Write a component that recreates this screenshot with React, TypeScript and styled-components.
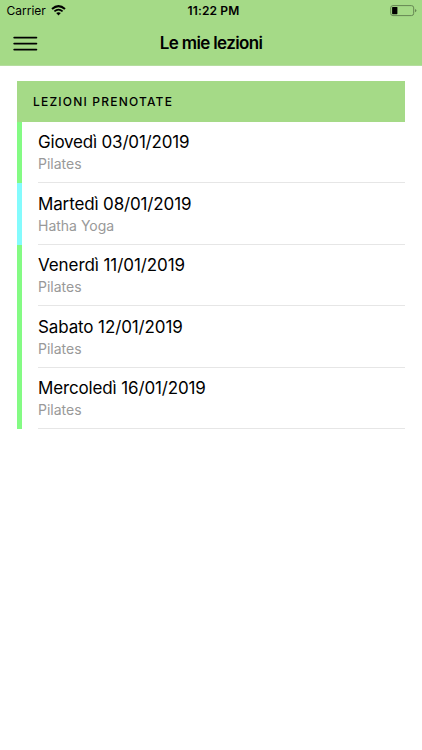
import React from "react";
import styled, { createGlobalStyle } from "styled-components";

const GlobalStyle = createGlobalStyle`
  * { box-sizing: border-box; }
  html, body { margin: 0; background: #fff; }
  body { font-family: Inter, "Liberation Sans", sans-serif; color: #000; }
`;

const Screen = styled.div`
  min-height: 750px;
  background: #fff;
`;

const TopArea = styled.header`
  height: 66px;
  background: #a5da87;
  border-bottom: 1px solid #b5dd9f;
`;

const StatusBar = styled.div`
  display: grid;
  grid-template-columns: 1fr auto 1fr;
  align-items: start;
  height: 22px;
  padding: 0 5px 0 6.5px;
`;

const Carrier = styled.div`
  display: flex;
  align-items: center;
  gap: 5px;
  font-size: 12px;
  line-height: 22px;
`;

const Signal = styled.span`
  display: flex;
  margin-top: -1px;
`;

const Clock = styled.div`
  padding-left: 3.5px;
  font-size: 12px;
  line-height: 22px;
  font-weight: 600;
  letter-spacing: 0.15px;
`;

const BatterySlot = styled.div`
  display: flex;
  justify-content: flex-end;
  padding-top: 5px;
`;

const NavBar = styled.div`
  display: grid;
  grid-template-columns: 50px 1fr 50px;
  align-items: center;
  height: 43px;
`;

const MenuButton = styled.button`
  display: flex;
  width: 50px;
  height: 43px;
  padding: 14px 0 0 13px;
  border: 0;
  background: none;
`;

const Title = styled.h1`
  margin: 0;
  font-size: 17px;
  line-height: 43px;
  font-weight: 600;
  letter-spacing: -0.65px;
  text-align: center;
`;

const Lessons = styled.main`
  margin: 15px 16.6px 0 16.5px;
`;

const SectionTitle = styled.h2`
  height: 40.5px;
  margin: 0;
  padding-left: 16.5px;
  background: #a5da87;
  font-size: 12px;
  line-height: 41px;
  font-weight: 500;
  letter-spacing: 1.2px;
`;

const LessonList = styled.ul`
  margin: 0;
  padding: 0;
  list-style: none;
`;

const LessonRow = styled.li<{ $accent: string }>`
  height: 61.5px;
  padding-left: 16.5px;
  border-left: 5px solid ${(p) => p.$accent};
`;

const LessonBody = styled.div`
  height: 100%;
  padding-top: 9.5px;
  border-bottom: 1px solid #e6e6e6;
`;

const LessonDate = styled.div<{ $tracking: number }>`
  font-size: 17px;
  line-height: 22px;
  letter-spacing: ${(p) => p.$tracking}px;
`;

const LessonKind = styled.div`
  font-size: 14px;
  line-height: 21px;
  color: #999;
`;

const lessons = [
  { date: "Giovedì 03/01/2019", kind: "Pilates", accent: "#84fb84", tracking: -0.19 },
  { date: "Martedì 08/01/2019", kind: "Hatha Yoga", accent: "#84fbfd", tracking: -0.14 },
  { date: "Venerdì 11/01/2019", kind: "Pilates", accent: "#84fb84", tracking: -0.08 },
  { date: "Sabato 12/01/2019", kind: "Pilates", accent: "#84fb84", tracking: -0.12 },
  { date: "Mercoledì 16/01/2019", kind: "Pilates", accent: "#84fb84", tracking: -0.14 },
];

const WifiIcon = () => (
  <svg width="15" height="11" viewBox="0 0 15 11" fill="none" stroke="#000">
    <path d="M1 4Q7.5-1.8 14 4" strokeWidth="2" />
    <path d="M3.4 6.4Q7.5 2.8 11.6 6.4" strokeWidth="1.8" />
    <path d="M5.2 8.1Q7.5 6.2 9.8 8.1L7.5 10.4Z" fill="#000" stroke="none" />
  </svg>
);

const BatteryIcon = () => (
  <svg width="27" height="12" viewBox="0 0 27 12">
    <rect x="0.7" y="0.6" width="23" height="10" rx="2.3" fill="none" stroke="#668653" />
    <rect x="2.1" y="2" width="5.3" height="7.2" rx="0.6" fill="#000" />
    <path d="M25 3.9Q26.4 4.4 26.4 5.6T25 7.3Z" fill="#668653" />
  </svg>
);

const MenuIcon = () => (
  <svg width="25" height="17" viewBox="0 0 25 17" stroke="#000" strokeWidth="1.8" strokeLinecap="round">
    <path d="M1.2 1.6H23.4M1.2 7.6H23.4M1.2 13.6H23.4" />
  </svg>
);

export default function App() {
  return (
    <Screen>
      <GlobalStyle />
      <TopArea>
        <StatusBar>
          <Carrier>
            <span>Carrier</span>
            <Signal>
              <WifiIcon />
            </Signal>
          </Carrier>
          <Clock>11:22 PM</Clock>
          <BatterySlot>
            <BatteryIcon />
          </BatterySlot>
        </StatusBar>
        <NavBar>
          <MenuButton aria-label="Menu">
            <MenuIcon />
          </MenuButton>
          <Title>Le mie lezioni</Title>
        </NavBar>
      </TopArea>
      <Lessons>
        <SectionTitle>LEZIONI PRENOTATE</SectionTitle>
        <LessonList>
          {lessons.map((l) => (
            <LessonRow key={l.date} $accent={l.accent}>
              <LessonBody>
                <LessonDate $tracking={l.tracking}>{l.date}</LessonDate>
                <LessonKind>{l.kind}</LessonKind>
              </LessonBody>
            </LessonRow>
          ))}
        </LessonList>
      </Lessons>
    </Screen>
  );
}
